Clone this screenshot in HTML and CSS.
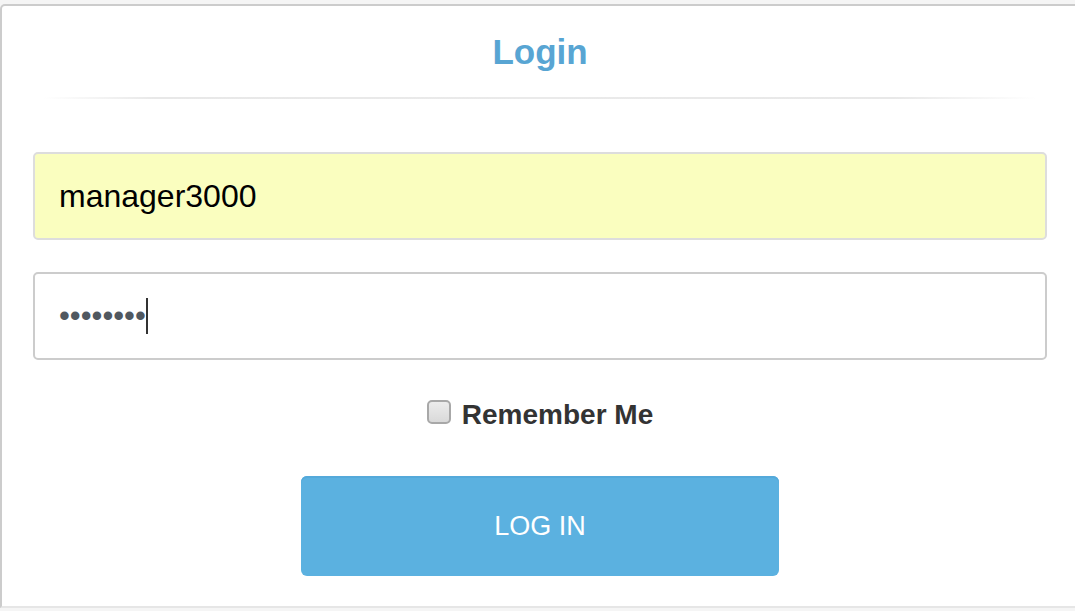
FILE: index.html
```html
<!DOCTYPE html>
<html lang="en">
<head>
<meta charset="utf-8">
<title>Login</title>
<link rel="stylesheet" href="styles.css">
</head>
<body>
<div class="page">
  <form class="card">
    <h1 class="title">Login</h1>
    <div class="divider"></div>
    <div class="field field-autofill"><span class="field-text">manager3000</span></div>
    <div class="field field-password"><span class="field-dots">••••••••</span><span class="caret"></span></div>
    <label class="remember">
      <span class="checkbox"></span>
      <span class="remember-text">Remember Me</span>
    </label>
    <button type="button" class="btn">LOG IN</button>
  </form>
</div>
</body>
</html>
```

FILE: styles.css
```css
html, body {
  margin: 0;
  padding: 0;
  background: #f5f5f5;
  overflow: hidden;
  font-family: "Liberation Sans", Arial, sans-serif;
}

.page {
  padding-top: 4px;
  width: 1075px;
  height: 611px;
  overflow: hidden;
}

.card {
  width: 1014px;
  background: #ffffff;
  border: 2px solid #cccccc;
  border-bottom-color: #e6e6e6;
  border-radius: 5px 5px 0 0;
  padding: 26px 31px 30px 31px;
  display: flex;
  flex-direction: column;
  align-items: stretch;
}

.title {
  margin: 0;
  text-align: center;
  font-size: 35px;
  line-height: 40px;
  font-weight: bold;
  color: #58a5d3;
}

.divider {
  margin-top: 25px;
  height: 2px;
  background: linear-gradient(to right, rgba(230,230,230,0) 0%, rgba(230,230,230,0) 1%, #e8e8e8 12%, #eaeaea 50%, #e8e8e8 85%, rgba(230,230,230,0) 99%);
}

.field {
  box-sizing: border-box;
  height: 88px;
  border: 2px solid #cccccc;
  border-radius: 5px;
  background: #ffffff;
  display: flex;
  align-items: center;
  padding: 0 24px;
  font-size: 32px;
}

.field-autofill {
  margin-top: 53px;
  background: #fafebf;
  border-color: #dddddd;
  color: #000000;
}

.field-password {
  margin-top: 32px;
  color: #505860;
  font-size: 31px;
}

.field-dots {
  line-height: 36px;
}

.caret {
  width: 2px;
  height: 36px;
  background: #333333;
}

.remember {
  margin-top: 39px;
  display: flex;
  justify-content: center;
  align-items: flex-start;
  gap: 11px;
}

.checkbox {
  box-sizing: border-box;
  width: 24px;
  height: 24px;
  margin-top: 1px;
  border: 2px solid #a8a8a8;
  border-radius: 5px;
  background: linear-gradient(#ececec, #d9d9d9);
}

.remember-text {
  font-size: 28px;
  line-height: 32px;
  font-weight: bold;
  color: #333333;
}

.btn {
  align-self: center;
  margin-top: 45px;
  width: 478px;
  height: 100px;
  box-sizing: border-box;
  border: none;
  box-shadow: inset 0 2px 0 #54a9da;
  border-radius: 6px;
  background: #5bb1e0;
  color: #ffffff;
  font-family: "Liberation Sans", Arial, sans-serif;
  font-size: 27px;
  padding: 0;
}
```
